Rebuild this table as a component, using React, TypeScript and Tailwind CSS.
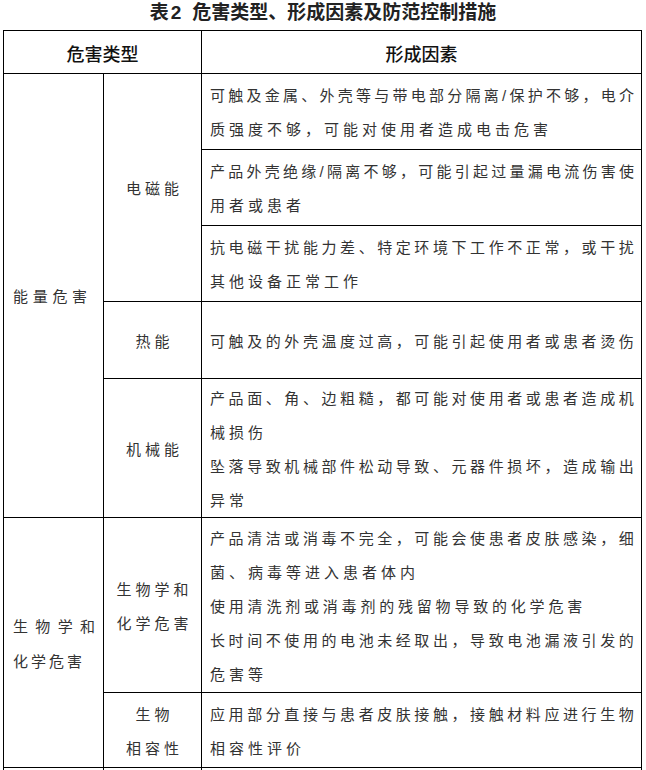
import React from "react";

const J = ({ t }: { t: string }) => (
  <div className="flex justify-between">
    {Array.from(t).map((c, i) => (
      <span key={i}>{c}</span>
    ))}
  </div>
);

const L = ({ t, ls = "tracking-[4px]" }: { t: string; ls?: string }) => (
  <div className={ls}>{t}</div>
);

const c3 =
  "bg-white col-start-3 flex flex-col justify-center pl-[8px] pr-[7px] pt-[3px] text-[15px] leading-[34px] text-[#333]";
const c2 =
  "bg-white col-start-2 flex flex-col justify-center items-center pl-[4px] pt-[3px] text-[15px] leading-[34px] text-[#333] tracking-[4px] text-center";

export default function App() {
  return (
    <div className="w-[646px] bg-white font-['Liberation_Sans','Noto_Sans_CJK_SC',sans-serif]">
      <div className="h-[30px] flex justify-center items-start">
        <div className="text-[19px] leading-[25px] font-bold text-[#222]">
          表<span className="ml-[2px]">2</span>
          <span className="ml-[11px]">危害类型、形成因素及防范控制措施</span>
        </div>
      </div>
      <div className="ml-[3px] w-[639px] bg-black p-px grid gap-px grid-cols-[99px_97px_439px] grid-rows-[42px_75px_75px_75px_76px_138px_174px_74px_40px]">
        {/* header */}
        <div className="bg-white col-start-1 col-span-2 row-start-1 flex items-center justify-center pt-[7px] text-[18px] font-medium text-[#111]">
          危害类型
        </div>
        <div className="bg-white col-start-3 row-start-1 flex items-center justify-center pt-[7px] text-[18px] font-medium text-[#111]">
          形成因素
        </div>

        {/* col 1 */}
        <div className="bg-white col-start-1 row-start-2 row-span-5 flex flex-col justify-center pl-[9px] pr-[8px] pt-[3px] text-[15px] leading-[34px] text-[#333]">
          <L t="能量危害" ls="tracking-[4.7px]" />
        </div>
        <div className="bg-white col-start-1 row-start-7 row-span-2 flex flex-col justify-center pl-[9px] pr-[8px] pt-[3px] text-[15px] leading-[35px] text-[#333]">
          <J t="生物学和" />
          <L t="化学危害" ls="tracking-[3px]" />
        </div>
        <div className="bg-white col-start-1 row-start-9" />

        {/* col 2 */}
        <div className={`${c2} row-start-2 row-span-3`}>电磁能</div>
        <div className={`${c2} row-start-5`}>热能</div>
        <div className={`${c2} row-start-6`}>机械能</div>
        <div className={`${c2} row-start-7 tracking-[3px]`}>
          <div>生物学和</div>
          <div>化学危害</div>
        </div>
        <div className={`${c2} row-start-8`}>
          <div>生物</div>
          <div>相容性</div>
        </div>
        <div className="bg-white col-start-2 row-start-9" />

        {/* col 3 */}
        <div className={`${c3} row-start-2`}>
          <J t="可触及金属、外壳等与带电部分隔离/保护不够，电介" />
          <L t="质强度不够，可能对使用者造成电击危害" />
        </div>
        <div className={`${c3} row-start-3`}>
          <J t="产品外壳绝缘/隔离不够，可能引起过量漏电流伤害使" />
          <L t="用者或患者" />
        </div>
        <div className={`${c3} row-start-4`}>
          <J t="抗电磁干扰能力差、特定环境下工作不正常，或干扰" />
          <L t="其他设备正常工作" />
        </div>
        <div className={`${c3} row-start-5`}>
          <J t="可触及的外壳温度过高，可能引起使用者或患者烫伤" />
        </div>
        <div className={`${c3} row-start-6`}>
          <J t="产品面、角、边粗糙，都可能对使用者或患者造成机" />
          <L t="械损伤" />
          <J t="坠落导致机械部件松动导致、元器件损坏，造成输出" />
          <L t="异常" />
        </div>
        <div className={`${c3} row-start-7`}>
          <J t="产品清洁或消毒不完全，可能会使患者皮肤感染，细" />
          <L t="菌、病毒等进入患者体内" />
          <L t="使用清洗剂或消毒剂的残留物导致的化学危害" ls="tracking-[3.8px]" />
          <J t="长时间不使用的电池未经取出，导致电池漏液引发的" />
          <L t="危害等" />
        </div>
        <div className={`${c3} row-start-8`}>
          <J t="应用部分直接与患者皮肤接触，接触材料应进行生物" />
          <L t="相容性评价" />
        </div>
        <div className="bg-white col-start-3 row-start-9" />
      </div>
    </div>
  );
}
